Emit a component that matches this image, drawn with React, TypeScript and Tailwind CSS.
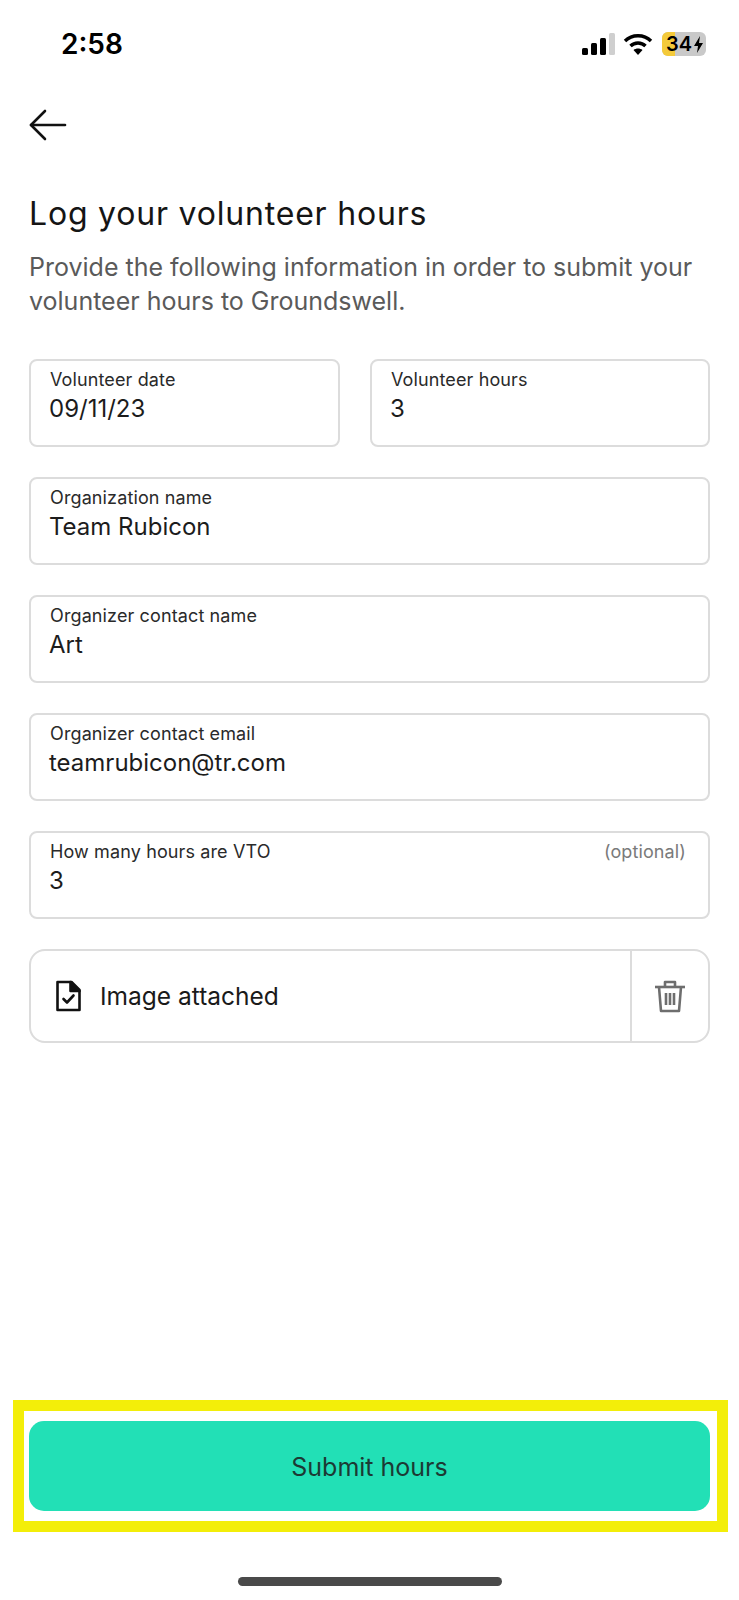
import React from "react";

const font = { fontFamily: "Inter, 'Liberation Sans', sans-serif" };

function Field({ label, value, optional, className = "" }: { label: string; value: string; optional?: boolean; className?: string }) {
  return (
    <div className={`h-[88px] rounded-[8px] border-2 border-[#dcdcdc] pl-[18px] pr-[22px] pt-[8px] ${className}`}>
      <div className="flex justify-between text-[18px] leading-[21px] tracking-[0.12px] text-[#2a2a2a]">
        <span className="ml-[1px]">{label}</span>
        {optional && <span className="text-[#7a7a7a]">(optional)</span>}
      </div>
      <div className="mt-[1px] text-[24px] leading-[36px] text-[#1c1c1c]">{value}</div>
    </div>
  );
}

export default function App() {
  return (
    <div className="flex h-[1600px] w-[739px] flex-col overflow-hidden bg-white" style={font}>
      <div className="flex h-[88px] shrink-0 items-center justify-between pl-[61px] pr-[33px]">
        <span className="text-[28px] font-semibold leading-none text-black">2:58</span>
        <div className="flex items-center gap-[8px]">
          <svg width="33" height="22" viewBox="0 0 33 22">
            <rect x="0" y="15" width="6" height="7" rx="1.5" fill="#000" />
            <rect x="9" y="10" width="6" height="12" rx="1.5" fill="#000" />
            <rect x="18" y="5" width="6" height="17" rx="1.5" fill="#000" />
            <rect x="27" y="0" width="6" height="22" rx="1.5" fill="#cfcfcf" />
          </svg>
          <svg width="30" height="22" viewBox="0 0 30 22" fill="none" stroke="#000" strokeWidth="3.4">
            <path d="M2 8 C9 1 21 1 28 8" />
            <path d="M7.5 13 C11.5 9 18.5 9 22.5 13" />
            <path d="M15 22 L10.5 17 C13 15 17 15 19.5 17 Z" fill="#000" stroke="none" />
          </svg>
          <div className="relative ml-[1px] flex h-[24px] w-[44px] items-center overflow-hidden rounded-[6px] bg-[#c9c9c9] pl-[4px]">
            <div className="absolute inset-y-0 left-0 w-[13px] bg-[#f4ca3a]" />
            <span className="relative text-[20px] font-semibold leading-none text-black">34</span>
            <svg className="relative ml-[1px]" width="11" height="17" viewBox="0 0 11 17">
              <path d="M7 0 L1 10 H5 L4 17 L10 7 H6 Z" fill="#000" />
            </svg>
          </div>
        </div>
      </div>

      <div className="px-[29px] pt-[21px]">
        <svg className="block" width="38" height="32" viewBox="0 0 38 32" fill="none" stroke="#111" strokeWidth="2.6" strokeLinecap="round" strokeLinejoin="round">
          <path d="M36 16 H2" />
          <path d="M16 2 L2 16 L16 30" />
        </svg>

        <h1 className="mt-[52px] text-[32px] font-normal leading-[42px] tracking-[0.8px] text-[#151515]">Log your volunteer hours</h1>
        <p className="mt-[15px] text-[25px] leading-[34px] text-[#5a5a5a]">
          Provide the following information in order to submit your
          <br />
          volunteer hours to Groundswell.
        </p>

        <div className="mt-[41px] flex flex-col gap-[30px]">
          <div className="flex gap-[30px]">
            <Field label="Volunteer date" value="09/11/23" className="w-[311px]" />
            <Field label="Volunteer hours" value="3" className="flex-1" />
          </div>
          <Field label="Organization name" value="Team Rubicon" />
          <Field label="Organizer contact name" value="Art" />
          <Field label="Organizer contact email" value="teamrubicon@tr.com" />
          <Field label="How many hours are VTO" value="3" optional />
          <div className="flex h-[94px] items-stretch rounded-[16px] border-2 border-[#dcdcdc]">
            <div className="flex flex-1 items-center gap-[18px] pl-[24px]">
              <svg width="27" height="32" viewBox="0 0 26 32" fill="none" stroke="#111" strokeWidth="2.6" strokeLinejoin="round">
                <path d="M2 2 H16 L24 10 V30 H2 Z" />
                <path d="M15 2 L24 11 H15 Z" fill="#111" />
                <path d="M8 19 L11.5 22.5 L18 15.5" strokeLinecap="round" />
              </svg>
              <span className="text-[24.5px] leading-none text-[#1a1a1a]">Image attached</span>
            </div>
            <div className="flex w-[78px] items-center justify-center border-l-2 border-[#dcdcdc]">
              <svg width="30" height="33" viewBox="0 0 30 33" fill="none" stroke="#6e6e6e" strokeWidth="2.6" strokeLinejoin="round">
                <path d="M0 7 H30" />
                <path d="M10 7 V2 H20 V7" />
                <path d="M4 7 L6 31 H24 L26 7" />
                <path d="M11 13 V25 M15 13 V25 M19 13 V25" />
              </svg>
            </div>
          </div>
        </div>
      </div>

      <div className="mt-auto pl-[13px] pr-[11px]">
        <div className="border-[11px] border-[#f3ee09] pb-[10px] pl-[5px] pr-[7px] pt-[10px]">
          <div className="flex h-[90px] items-center justify-center rounded-[15px] bg-[#22e0b6] pt-[4px] text-[25px] text-[#1c3a34]">Submit hours</div>
        </div>
      </div>
      <div className="flex h-[68px] shrink-0 items-start justify-center pt-[45px]">
        <div className="h-[9px] w-[264px] rounded-full bg-[#4a4a4a]" />
      </div>
    </div>
  );
}
